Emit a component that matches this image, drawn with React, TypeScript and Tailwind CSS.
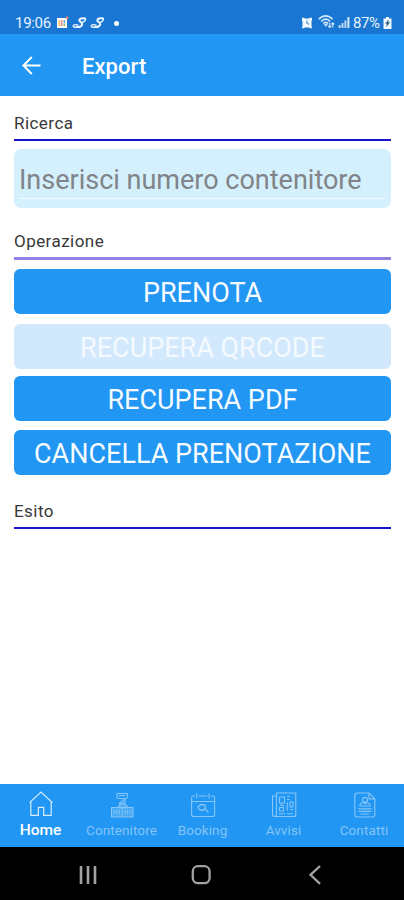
import React from "react";

function StatusBar() {
  return (
    <div className="flex h-[34px] shrink-0 items-start bg-[#1976d2] pl-[15px] pr-3 pt-[14px] text-[#e6f3ff]">
      <span className="w-[36px] whitespace-nowrap text-[15px] leading-[18px] tracking-[-0.3px]">19:06</span>
      <svg className="ml-[5px] mt-[2px] h-[13px] w-[13px]" viewBox="0 0 13 13">
        <path d="M1 2h10v10H1z" fill="#fffaf2" />
        <path d="M3.4 4v6" stroke="#f3b866" strokeWidth="1.5" />
        <path d="M5.8 4v6" stroke="#ef8480" strokeWidth="1.4" />
        <path d="M8.3 4v3" stroke="#68a9e7" strokeWidth="1.5" />
        <path d="M8.3 7.5v2.5" stroke="#77ba78" strokeWidth="1.5" />
        <circle cx="11.1" cy="1.9" r="1.4" fill="#ef8b72" />
      </svg>
      {[0, 1].map((i) => (
        <svg key={i} className="ml-[3px] mt-[3px] h-[12px] w-[15px]" viewBox="0 0 15 12" fill="none" stroke="#eef8ff" strokeLinecap="round">
          <path d="M13 1.4C10 .8 7.4 1.6 7.3 3.4c0 1.5 3.3 2 2.9 4-.3 1.9-2.8 2.8-5 2.6" strokeWidth="2" />
          <path d="M5.2 10C3 10.6.8 10 1.2 8.7c.5-1.4 3.3-1.3 4.9-.6M10.2 5.3c1.8-.3 3-1.5 3.4-3.2" strokeWidth="1.3" />
        </svg>
      ))}
      <span className="ml-[9px] mt-[7px] h-[5px] w-[5px] rounded-full bg-white" />
      <span className="flex-1" />
      <svg className="mt-[3px] h-[12px] w-[12px]" viewBox="0 0 12 12">
        <path d="M1 .8h2.2l.6.8h4.4l.6-.8H11v2.4l-.5 1v4.4l.5 2.6H9l-.7-.8H3.7l-.7.8H1l.5-2.6V4.2l-.5-1z" fill="#f3faff" />
        <path d="M6 3.4v3l2.2.8" fill="none" stroke="#5286bb" strokeWidth="1.1" />
      </svg>
      <svg className="ml-[5px] mt-[1px] h-[14px] w-[17px]" viewBox="0 0 17 14" fill="none" stroke="#d0e7fb" strokeWidth="1.6">
        <path d="M.8 4.2C5-.2 10.5-.2 14.5 4.2M3.2 6.4c2.6-3 6.2-3 8.9 0M5.3 8.6c1.4-1.7 3.3-1.7 4.8 0" />
        <path d="M6 9.3h3.6L8 11.6z" fill="#d0e7fb" strokeWidth=".5" />
        <path d="M11.8 7.5v4.8M10.2 10.8l1.6 1.6 1.5-1.6M14.8 12.6V8M13.4 9.4l1.4-1.6 1.4 1.6" strokeWidth="1.1" />
      </svg>
      <svg className="ml-[3px] mt-[3px] h-[11px] w-[12px]" viewBox="0 0 12 11" fill="#b9daf7">
        <path d="M.6 8h2v3h-2zM3.5 6h2v5h-2zM6.4 3.5h2V11h-2z" />
        <path d="M9.4 0h2v11h-2z" fill="#d5e9fb" />
      </svg>
      <span className="ml-[3px] w-[29px] whitespace-nowrap text-[15px] leading-[18px] tracking-[-0.4px]">87%</span>
      <svg className="ml-px mt-[3px] h-[12px] w-[9px]" viewBox="0 0 9 12">
        <path d="M3 0h3v1.5h2.5V12h-8V1.5H3z" fill="#f0f8ff" />
        <path d="M5.5 3L2.5 6.6h1.8L3.5 9.6l3.2-4.2H4.8z" fill="#27537e" stroke="#27537e" strokeWidth=".4" />
      </svg>
    </div>
  );
}

function Header() {
  return (
    <header className="flex h-[62px] shrink-0 items-center bg-[#2196f3] pl-[22px] text-white">
      <svg className="h-[19px] w-[19px]" viewBox="0 0 19 19" fill="none" stroke="white" strokeWidth="2">
        <path d="M18.5 9.5H1.5M9.8 1L1.4 9.5l8.4 8.5" />
      </svg>
      <h1 className="ml-[41px] pt-[3px] text-[22px] font-medium leading-7 tracking-[0.05px]">Export</h1>
    </header>
  );
}

function Label({ children }: { children: React.ReactNode }) {
  return <h2 className="h-6 text-[17px] font-normal leading-6 tracking-[0.45px] text-[#383838]">{children}</h2>;
}

function Action({ children, className = "" }: { children: React.ReactNode; className?: string }) {
  return (
    <button className={`flex h-[45px] w-full shrink-0 items-center justify-center whitespace-nowrap rounded-[6px] pt-[3px] text-[27px] leading-8 ${className}`}>
      {children}
    </button>
  );
}

function HomeIcon() {
  return (
    <svg className="h-7 w-7" viewBox="0 0 28 28" fill="none" stroke="#d8edff" strokeWidth="1.2">
      <path d="M2.6 12.6L14 2l11.4 10.6M3.8 11.7v13.7h7.5v-8.1h5.4v8.1h7.5V11.7" />
    </svg>
  );
}

function ContainerIcon() {
  return (
    <svg className="h-7 w-7" viewBox="0 0 28 28" fill="none" stroke="currentColor" strokeWidth="1.1">
      <path d="M9 3.5h10.5v4l-2 1H11l-2-1zM11 5.5h6.5M15.5 8.5v2L12 12.5q-1.5 1.5.5 2.5M17 9v3.5l-2.5 1" />
      <path d="M11 16l1.5-2.5h4L19 16v2h-8z" fill="currentColor" fillOpacity=".5" />
      <path d="M3.5 17.5h21.5v9.5H3.5z" fill="currentColor" fillOpacity=".4" />
      <path d="M14.2 17.5V27M6.3 20v4.5M8.8 20v4.5M11.3 20v4.5M17 20v4.5M19.5 20v4.5M22 20v4.5" strokeWidth=".9" />
    </svg>
  );
}

function BookingIcon() {
  return (
    <svg className="h-7 w-7" viewBox="0 0 28 28" fill="none" stroke="currentColor" strokeWidth="1.1">
      <path d="M6 6H4.5Q2.6 6 2.6 8v16.5q0 2 2 2h19q2 0 2-2V8q0-2-2-2H22M9.5 6h9M7.8 3.5v5M20.2 3.5v5M2.6 11.5h23" />
      <path d="M9 16.8l3-2.3 4 .4.5 3.4-3 2.2-3.3-.8zM15.5 18.5l4 4" strokeWidth="1.3" />
    </svg>
  );
}

function NewsIcon() {
  return (
    <svg className="h-7 w-7" viewBox="0 0 28 28" fill="none" stroke="currentColor" strokeWidth="1.1">
      <path d="M6.5 3h19.3v21.5q0 2-2 2H4.5q-2 0-2-2V6h4zM6.5 6v18q0 2-1.5 2M9.5 7h5v6h-5zM11 13v2.5h3M9.5 17.5h4v3.5h-4zM9 23.8h6M17 6.5h2.5M17 9.5h2.5M17.3 12.5v8M20 12h3v5h-3zM20 19.5h3M17 23.8h6" />
    </svg>
  );
}

function ContactIcon() {
  return (
    <svg className="ml-[2px] h-7 w-7" viewBox="0 0 28 28" fill="none" stroke="currentColor" strokeWidth="1.15">
      <path d="M6.5 3h11.5l5.8 5.8V24.5q0 2.5-2.5 2.5h-15Q3.8 27 3.8 24.5V5.5Q3.8 3 6.5 3zM18 3v5.8h5.8" />
      <circle cx="14" cy="9.8" r="2.5" />
      <path d="M9 16v-1.5q1-2 3.2-2l1.8 1.3 1.8-1.3q2.2 0 3.2 2V16zM7.5 18.8h13M7.5 21.3h13M9.5 24h9" />
    </svg>
  );
}

function Tab({ icon, label, className, active = false }: { icon: React.ReactNode; label: string; className: string; active?: boolean }) {
  return (
    <div className={`flex flex-col items-center pt-[6px] ${active ? "text-white" : "text-[#85c5f8]"} ${className}`}>
      <div className="flex h-7 justify-center">{icon}</div>
      <span className={`mt-[3px] whitespace-nowrap leading-[18px] ${active ? "text-[15.5px] font-medium" : "text-[13.5px] tracking-[0.1px]"}`}>{label}</span>
    </div>
  );
}

export default function App() {
  return (
    <div className="flex h-[900px] w-[404px] flex-col overflow-hidden bg-white font-['Roboto',sans-serif]">
      <StatusBar />
      <Header />
      <main className="flex min-h-0 flex-1 flex-col pl-[14px] pr-[13px] pt-[15px]">
        <Label>Ricerca</Label>
        <div className="mt-[4px] h-[2px] shrink-0 bg-[#1915cc]" />
        <div className="mt-[8px] flex h-[59px] shrink-0 flex-col rounded-[7px] bg-[#d5f0fd] px-[5px] pt-[14px]">
          <span className="h-[35px] whitespace-nowrap text-[27px] leading-[34px] text-[#808488]">Inserisci numero contenitore</span>
          <div className="h-px bg-[#edfaff]" />
        </div>
        <div className="mt-[21px]"><Label>Operazione</Label></div>
        <div className="mt-[4px] h-[3px] shrink-0 bg-[#8e82e5]" />
        <Action className="mt-[9px] bg-[#2196f3] text-[#f5fbff]">PRENOTA</Action>
        <Action className="mt-[10px] bg-[#d2e9fd] text-[#f4faff]">RECUPERA QRCODE</Action>
        <Action className="mt-[7px] bg-[#2196f3] text-[#f5fbff]">RECUPERA PDF</Action>
        <Action className="mt-[9px] bg-[#2196f3] text-[#f5fbff]">CANCELLA PRENOTAZIONE</Action>
        <div className="mt-[24px]"><Label>Esito</Label></div>
        <div className="mt-[4px] h-[2px] shrink-0 bg-[#1915cc]" />
      </main>
      <nav className="flex h-[63px] shrink-0 bg-[#2196f3]">
        <Tab className="w-[81px]" active icon={<HomeIcon />} label="Home" />
        <Tab className="w-[81px]" icon={<ContainerIcon />} label="Contenitore" />
        <Tab className="w-[81px]" icon={<BookingIcon />} label="Booking" />
        <Tab className="w-[81px]" icon={<NewsIcon />} label="Avvisi" />
        <Tab className="w-[80px]" icon={<ContactIcon />} label="Contatti" />
      </nav>
      <footer className="flex h-[53px] shrink-0 bg-black pt-[17px] text-[#a2a2a2]">
        <svg className="ml-[78px] h-[21px] w-[20px]" viewBox="0 0 20 21" fill="none" stroke="currentColor" strokeWidth="2.6">
          <path d="M3 2v18M10 2v18M17 2v18" />
        </svg>
        <svg className="ml-[93px] h-[21px] w-[20px]" viewBox="0 0 20 21" fill="none" stroke="currentColor" strokeWidth="2.3">
          <rect x="1.8" y="2.2" width="16.8" height="17" rx="5.2" />
        </svg>
        <svg className="ml-[97px] h-[21px] w-[13px]" viewBox="0 0 13 21" fill="none" stroke="currentColor" strokeWidth="2.3">
          <path d="M12 2L2.5 10.8l9.5 9" />
        </svg>
      </footer>
    </div>
  );
}
